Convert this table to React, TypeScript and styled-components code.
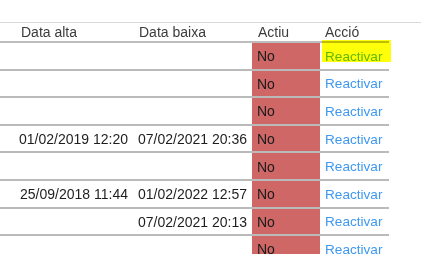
import styled, { createGlobalStyle } from "styled-components";

const GlobalStyle = createGlobalStyle`
  html, body {
    margin: 0;
    padding: 0;
    background: #ffffff;
    overflow: hidden;
  }
  body {
    font-family: "Liberation Sans", Arial, sans-serif;
    font-size: 14px;
  }
`;

const COLS = "133px 119px 68px 69px";

const Frame = styled.div`
  margin-top: 22px;
  width: 421px;
  border-top: 1px solid #d9d9d9;
`;

const Table = styled.div`
  width: 389px;
  display: flex;
  flex-direction: column;
`;

const HeaderRow = styled.div`
  display: grid;
  grid-template-columns: ${COLS};
  height: 20px;
  box-sizing: border-box;
  border-bottom: 2px solid #bdbdbd;
`;

const HeadCell = styled.div<{ $pad: number }>`
  display: flex;
  align-items: center;
  padding-left: ${({ $pad }) => $pad}px;
  color: #3c3c3c;
  white-space: nowrap;
`;

const Row = styled.div`
  display: grid;
  grid-template-columns: ${COLS};
  height: 27.6px;
  box-sizing: border-box;
  border-bottom: 2px solid #bababa;
`;

const DateCell = styled.div`
  display: flex;
  align-items: center;
  justify-content: flex-end;
  padding: 1px 5px 0 0;
  color: #1e1e1e;
  white-space: nowrap;
`;

const StateCell = styled.div`
  display: flex;
  align-items: center;
  padding: 1px 0 0 5px;
  background: #cf6767;
  color: #1a1a1a;
`;

const ActionCell = styled.div<{ $marked?: boolean }>`
  position: relative;
  display: flex;
  align-items: center;
  padding: 1px 0 0 5px;
  font-size: 13.6px;
  color: ${({ $marked }) => ($marked ? "#62b800" : "#3f98f0")};
  white-space: nowrap;

  /* highlighter stroke drawn over the first link */
  ${({ $marked }) =>
    $marked &&
    `
    &::after {
      content: "";
      position: absolute;
      left: 2px;
      right: -2px;
      top: -3px;
      height: 22px;
      background: #ffff0a;
      mix-blend-mode: multiply;
      pointer-events: none;
    }
  `}
`;

const rows = [
  { alta: "", baixa: "" },
  { alta: "", baixa: "" },
  { alta: "", baixa: "" },
  { alta: "01/02/2019 12:20", baixa: "07/02/2021 20:36" },
  { alta: "", baixa: "" },
  { alta: "25/09/2018 11:44", baixa: "01/02/2022 12:57" },
  { alta: "", baixa: "07/02/2021 20:13" },
  { alta: "", baixa: "" },
];

export default function App() {
  return (
    <>
      <GlobalStyle />
      <Frame>
        <Table>
          <HeaderRow>
            <HeadCell $pad={21}>Data alta</HeadCell>
            <HeadCell $pad={6}>Data baixa</HeadCell>
            <HeadCell $pad={6}>Actiu</HeadCell>
            <HeadCell $pad={5}>Acció</HeadCell>
          </HeaderRow>
          {rows.map((r, i) => (
            <Row key={i}>
              <DateCell>{r.alta}</DateCell>
              <DateCell>{r.baixa}</DateCell>
              <StateCell>No</StateCell>
              <ActionCell $marked={i === 0}>Reactivar</ActionCell>
            </Row>
          ))}
        </Table>
      </Frame>
    </>
  );
}
